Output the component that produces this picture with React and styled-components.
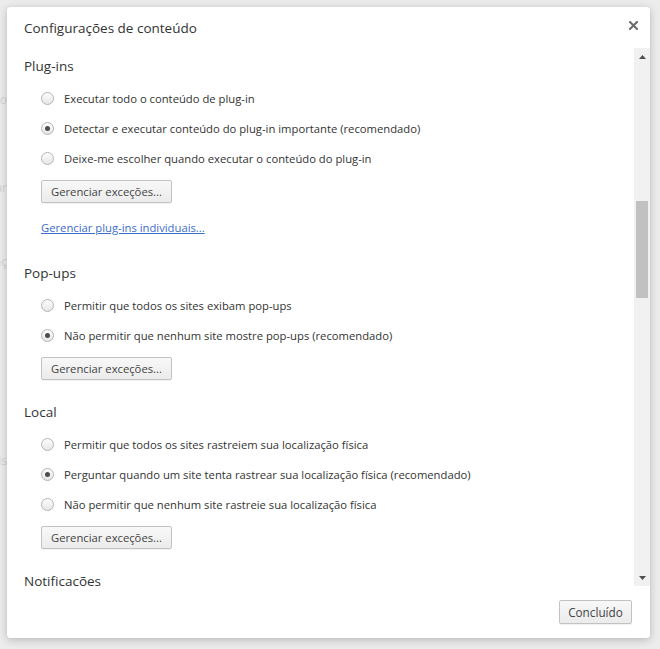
import React from 'react';
import styled, { createGlobalStyle } from 'styled-components';

const GlobalStyle = createGlobalStyle`
  html, body {
    margin: 0;
    padding: 0;
    background: #ececec;
  }
  body {
    font-family: "Open Sans", "Noto Sans", sans-serif;
    color: #333;
  }
`;

const sections = [
  {
    title: 'Plug-ins',
    options: [
      'Executar todo o conteúdo de plug-in',
      'Detectar e executar conteúdo do plug-in importante (recomendado)',
      'Deixe-me escolher quando executar o conteúdo do plug-in',
    ],
    checked: 1,
    link: 'Gerenciar plug-ins individuais...',
  },
  {
    title: 'Pop-ups',
    options: [
      'Permitir que todos os sites exibam pop-ups',
      'Não permitir que nenhum site mostre pop-ups (recomendado)',
    ],
    checked: 1,
  },
  {
    title: 'Local',
    options: [
      'Permitir que todos os sites rastreiem sua localização física',
      'Perguntar quando um site tenta rastrear sua localização física (recomendado)',
      'Não permitir que nenhum site rastreie sua localização física',
    ],
    checked: 1,
  },
];

// bits of the settings page showing behind the overlay
const peekLines = [
  { text: 'ação', top: 85 },
  { text: 'gerenciar', top: 72 },
  { text: 'configuraç', top: 58 },
  { text: 'Redes sociais', top: 183 },
];

const App = () => {
  return (
    <>
      <GlobalStyle />
      <Backdrop>
        <Peek>
          {peekLines.map((line, i) => (
            <PeekText key={i} $top={line.top}>{line.text}</PeekText>
          ))}
        </Peek>
        <Dialog>
          <Header>
            <Title>Configurações de conteúdo</Title>
            <Close aria-label="Fechar">
              <svg width="9" height="9" viewBox="0 0 9 9">
                <path d="M1 1 L8 8 M8 1 L1 8" stroke="#6b6b6b" strokeWidth="2" strokeLinecap="square" />
              </svg>
            </Close>
          </Header>
          <Body>
            <Content>
              {sections.map((section, si) => (
                <Section key={si}>
                  <SectionTitle>{section.title}</SectionTitle>
                  <OptionList>
                    {section.options.map((opt, oi) => (
                      <Option key={oi}>
                        <Radio $checked={oi === section.checked} />
                        <span>{opt}</span>
                      </Option>
                    ))}
                  </OptionList>
                  <Button>Gerenciar exceções...</Button>
                  {section.link && <Link href="#">{section.link}</Link>}
                </Section>
              ))}
              <Section>
                <SectionTitle>Notificações</SectionTitle>
              </Section>
            </Content>
            <Scrollbar>
              <Arrow>
                <svg width="7" height="4" viewBox="0 0 7 4"><path d="M0 4 L3.5 0 L7 4 Z" fill="#505050" /></svg>
              </Arrow>
              <Track>
                <Thumb $offset={136} $size={97} />
              </Track>
              <Arrow>
                <svg width="7" height="4" viewBox="0 0 7 4"><path d="M0 0 L3.5 4 L7 0 Z" fill="#505050" /></svg>
              </Arrow>
            </Scrollbar>
          </Body>
          <Footer>
            <Button $wide>Concluído</Button>
          </Footer>
        </Dialog>
      </Backdrop>
    </>
  );
};

const Backdrop = styled.div`
  display: flex;
  height: 649px;
  padding: 7px 10px 11px 0;
  box-sizing: border-box;
  overflow: hidden;
`;

const Peek = styled.div`
  width: 7px;
  flex: none;
  overflow: hidden;
  display: flex;
  flex-direction: column;
  align-items: flex-end;
`;

const PeekText = styled.div`
  margin-top: ${p => p.$top}px;
  font-size: 12px;
  line-height: 16px;
  color: #d2d2d2;
  white-space: nowrap;
`;

const Dialog = styled.div`
  width: 643px;
  height: 631px;
  flex: none;
  background: #fff;
  border-radius: 3px;
  box-shadow: 0 2px 9px rgba(0, 0, 0, 0.22), 0 0 1px rgba(0, 0, 0, 0.15);
  display: flex;
  flex-direction: column;
  overflow: hidden;
`;

const Header = styled.div`
  height: 41px;
  display: flex;
  align-items: flex-start;
  justify-content: space-between;
  padding: 11px 11px 0 17px;
  box-sizing: border-box;
  flex: none;
`;

const Title = styled.div`
  font-size: 13.5px;
  line-height: 20px;
  color: #333;
`;

const Close = styled.div`
  width: 12px;
  height: 12px;
  display: flex;
  align-items: center;
  justify-content: center;
  margin-top: 1px;
`;

const Body = styled.div`
  height: 538px;
  display: flex;
  flex: none;
`;

const Content = styled.div`
  flex: 1;
  overflow: hidden;
  padding: 8px 0 0 17px;
`;

const Section = styled.div`
  & + & {
    margin-top: 22px;
  }
`;

const SectionTitle = styled.div`
  font-size: 13.5px;
  line-height: 20px;
  color: #333;
`;

const OptionList = styled.div`
  margin-top: 7px;
  padding-left: 17px;
`;

const Option = styled.div`
  height: 30px;
  display: flex;
  align-items: center;
  font-size: 11.25px;
  color: #333;
  white-space: nowrap;
`;

const Radio = styled.span`
  width: 13px;
  height: 13px;
  box-sizing: border-box;
  border-radius: 50%;
  border: 1px solid #b5b5b5;
  background: linear-gradient(#fdfdfd, #e6e6e6);
  margin-right: 10px;
  flex: none;
  display: flex;
  align-items: center;
  justify-content: center;
  &::after {
    content: '';
    display: ${p => (p.$checked ? 'block' : 'none')};
    width: 5px;
    height: 5px;
    border-radius: 50%;
    background: #4d4d4d;
  }
`;

const Button = styled.button`
  display: block;
  margin: ${p => (p.$wide ? '0' : '7px 0 0 17px')};
  height: ${p => (p.$wide ? '24px' : '23px')};
  padding: 0 ${p => (p.$wide ? '8px' : '9px')};
  min-width: ${p => (p.$wide ? '73px' : '130px')};
  border: 1px solid #c2c2c2;
  border-radius: 2px;
  background: linear-gradient(#f8f8f8, #ebebeb);
  box-shadow: 0 1px 0 rgba(0, 0, 0, 0.05);
  font-family: "Open Sans", "Noto Sans", sans-serif;
  font-size: ${p => (p.$wide ? '11.75px' : '11.25px')};
  color: #444;
  cursor: pointer;
`;

const Link = styled.a`
  display: block;
  margin: 15px 0 25px 17px;
  line-height: 20px;
  font-size: 11.25px;
  color: #3b6ccb;
  text-decoration: underline;
`;

const Scrollbar = styled.div`
  width: 16px;
  flex: none;
  background: #f1f1f1;
  display: flex;
  flex-direction: column;
`;

const Arrow = styled.div`
  height: 17px;
  display: flex;
  align-items: center;
  justify-content: center;
  flex: none;
`;

const Track = styled.div`
  flex: 1;
  display: flex;
  flex-direction: column;
  align-items: center;
`;

const Thumb = styled.div`
  width: 12px;
  margin-top: ${p => p.$offset}px;
  height: ${p => p.$size}px;
  background: #c1c1c1;
`;

const Footer = styled.div`
  flex: 1;
  display: flex;
  justify-content: flex-end;
  align-items: flex-start;
  padding: 14px 18px 0 0;
`;

export default App;
